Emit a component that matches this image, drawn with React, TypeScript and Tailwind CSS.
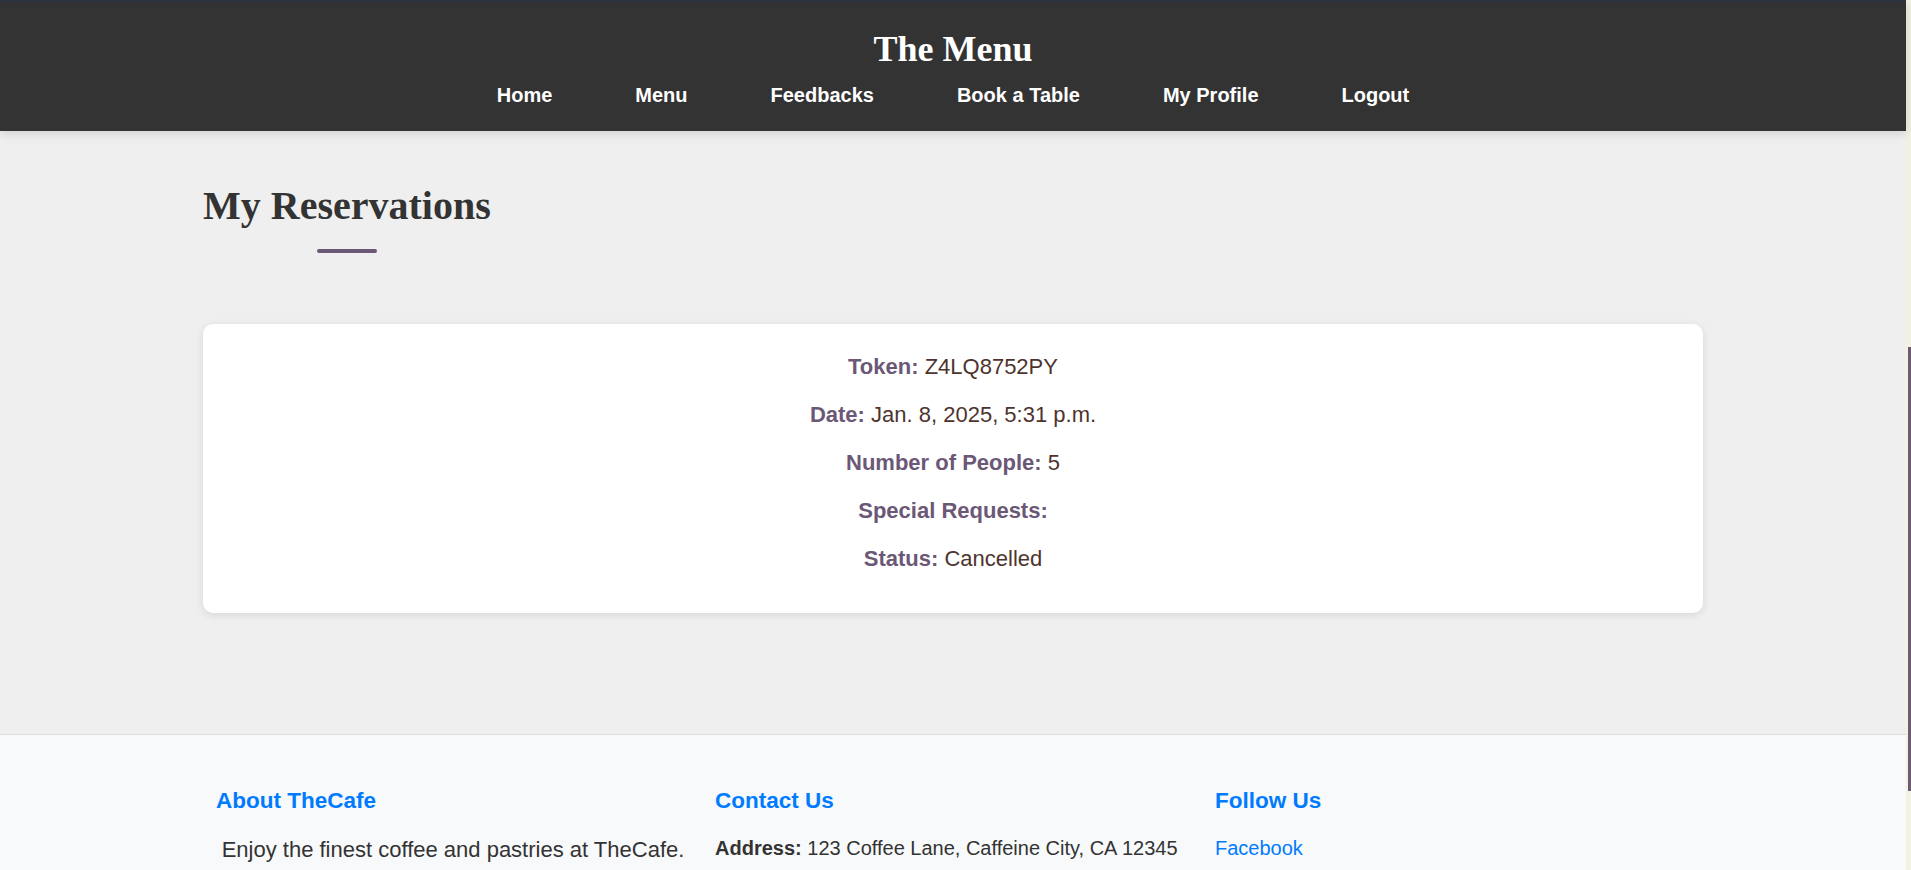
import React from "react";

const sans = "font-['Liberation_Sans',Arial,sans-serif]";
const serif = "font-['Liberation_Serif','Times_New_Roman',serif]";

function Row({ label, value }: { label: string; value?: string }) {
  return (
    <p className="leading-[25px]">
      <span className="font-bold text-[#6b5876]">{label}</span>
      {value ? <span className="text-[#4e342e]"> {value}</span> : null}
    </p>
  );
}

export default function App() {
  const nav = ["Home", "Menu", "Feedbacks", "Book a Table", "My Profile", "Logout"];
  return (
    <div className={`flex h-screen w-full overflow-hidden ${sans}`}>
      <div className="flex min-w-0 flex-1 flex-col bg-[#efefef]">
        <header className="relative z-10 border-t-2 border-[#2b3341] bg-[#333333] pt-[27px] pb-[24px] text-center text-white shadow-[0_2px_10px_rgba(0,0,0,0.15)]">
          <h1 className={`${serif} text-[36px] font-bold leading-[41px]`}>The Menu</h1>
          <nav className="mt-[14px] flex justify-center gap-[83px] text-[20px] font-bold leading-[23px]">
            {nav.map((n) => (
              <a key={n} className="text-white">
                {n}
              </a>
            ))}
          </nav>
        </header>

        <main className="pt-[52px] pb-[121px]">
          <div className="mx-auto w-[1500px]">
            <div className="flex w-fit flex-col items-center">
              <h2 className={`${serif} text-[40px] font-bold leading-[46px] text-[#333333]`}>My Reservations</h2>
              <div className="mt-[20px] h-[4px] w-[60px] rounded-full bg-[#6b5876]" />
            </div>

            <div className="mt-[71px] flex flex-col items-center gap-[23px] rounded-[10px] bg-white pt-[30px] pb-[42px] text-center text-[22px] shadow-[0_2px_8px_rgba(0,0,0,0.1)]">
              <Row label="Token:" value="Z4LQ8752PY" />
              <Row label="Date:" value="Jan. 8, 2025, 5:31 p.m." />
              <Row label="Number of People:" value="5" />
              <Row label="Special Requests:" />
              <Row label="Status:" value="Cancelled" />
            </div>
          </div>
        </main>

        <footer className="border-t border-[#dedede] bg-[#f8f9fa] pt-[53px] pb-[40px]">
          <div className="mx-auto grid w-[1500px] grid-cols-3">
            <div className="px-[13px]">
              <h3 className="text-[22.5px] font-bold leading-[26px] text-[#007bff]">About TheCafe</h3>
              <p className="mt-[23px] text-center text-[22px] leading-[25px] text-[#333333]">
                Enjoy the finest coffee and pastries at TheCafe.
              </p>
            </div>
            <div className="px-[12px]">
              <h3 className="text-[22.5px] font-bold leading-[26px] text-[#007bff]">Contact Us</h3>
              <div className="mt-[23px] flex flex-col gap-[12px] text-[20px] leading-[23px] text-[#333333]">
                <p>
                  <span className="font-bold">Address:</span> 123 Coffee Lane, Caffeine City, CA 12345
                </p>
              </div>
            </div>
            <div className="px-[12px]">
              <h3 className="text-[22.5px] font-bold leading-[26px] text-[#007bff]">Follow Us</h3>
              <div className="mt-[23px] flex flex-col gap-[12px] text-[20px] leading-[23px] text-[#007bff]">
                <a>Facebook</a>
              </div>
            </div>
          </div>
        </footer>
      </div>

      <div className="flex w-[5px] shrink-0 flex-col items-end bg-[#f3f2e1] pt-[347px]">
        <div className="h-[444px] w-[3px] bg-[#6e5a75]" />
      </div>
    </div>
  );
}
